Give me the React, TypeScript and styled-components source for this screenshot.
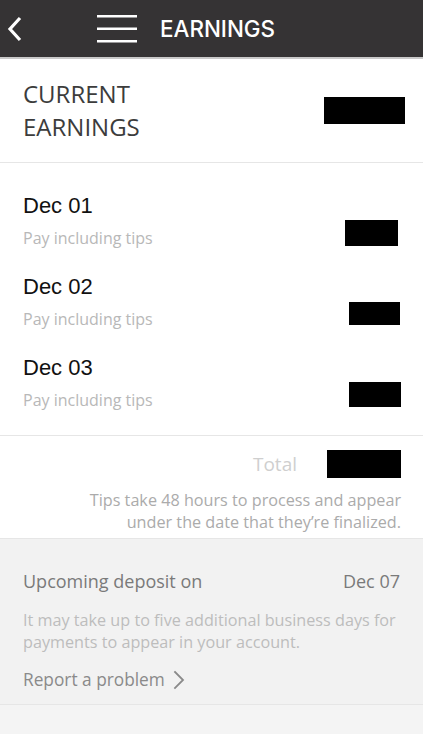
import React from 'react';
import styled, { createGlobalStyle } from 'styled-components';

const GlobalStyle = createGlobalStyle`
  body {
    margin: 0;
    background: #f4f4f4;
    font-family: 'Open Sans', sans-serif;
  }
`;

const Page = styled.div`
  width: 423px;
  min-height: 734px;
  background: #f4f4f4;
`;

const Header = styled.header`
  height: 57px;
  background: #353334;
  border-bottom: 2px solid #c9c9c9;
  display: flex;
  align-items: center;
`;

const IconButton = styled.button<{ $width: number; $end?: boolean }>`
  width: ${(p) => p.$width}px;
  height: 57px;
  padding: 0;
  border: none;
  background: none;
  display: flex;
  align-items: center;
  justify-content: ${(p) => (p.$end ? 'flex-end' : 'center')};
`;

const Title = styled.h1`
  margin: 0 0 0 23px;
  font-family: Inter, 'Liberation Sans', sans-serif;
  font-weight: 500;
  font-size: 22.4px;
  color: #fff;
`;

const Section = styled.section<{ $bg?: string; $pad: string }>`
  background: ${(p) => p.$bg || '#fff'};
  padding: ${(p) => p.$pad};
  border-bottom: 1px solid #e6e6e6;
`;

const Row = styled.div`
  display: flex;
  align-items: center;
  justify-content: space-between;
`;

const BigLabel = styled.div`
  font-size: 24px;
  line-height: 33px;
  color: #3c3c3c;
`;

const Redacted = styled.div<{ $w: number; $h: number; $shift?: number }>`
  width: ${(p) => p.$w}px;
  height: ${(p) => p.$h}px;
  background: #000;
  margin-right: ${(p) => p.$shift ?? 0}px;
`;

const DayRow = styled.div`
  display: flex;
  justify-content: space-between;
  align-items: flex-end;
  height: 81px;
`;

const DayText = styled.div`
  display: flex;
  flex-direction: column;
`;

const DayDate = styled.div`
  font-family: 'Liberation Sans', Arial, sans-serif;
  font-size: 22px;
  line-height: 26px;
  color: #111;
`;

const Muted = styled.div`
  font-size: 16px;
  line-height: 24px;
  color: #b8b8b8;
  margin-top: 7px;
`;

const TotalRow = styled.div`
  display: flex;
  justify-content: flex-end;
  align-items: center;
  gap: 30px;
  height: 30px;
`;

const TotalLabel = styled.span`
  font-size: 19px;
  color: #cfcfcf;
`;

const Note = styled.p<{ $align?: string; $color: string; $top: number }>`
  margin: ${(p) => p.$top}px 0 0;
  font-size: 16.2px;
  line-height: 22px;
  text-align: ${(p) => p.$align || 'left'};
  color: ${(p) => p.$color};
`;

const DepositLabel = styled.span`
  font-size: 18px;
  color: #7a7a7a;
`;

const LinkLine = styled.div`
  margin-top: 15px;
`;

const ReportLink = styled.a`
  display: inline-flex;
  align-items: center;
  gap: 8px;
  font-size: 17.3px;
  color: #8a8a8a;
  text-decoration: none;
`;

const Chevron = ({ size, color, width }: { size: number; color: string; width: number }) => (
  <svg width={size * 0.6} height={size} viewBox="0 0 12 20" fill="none">
    <path d="M2 2 L10 10 L2 18" stroke={color} strokeWidth={width} strokeLinecap="square" />
  </svg>
);

const days = [
  { date: 'Dec 01', w: 53, h: 26, shift: 2, pad: 4 },
  { date: 'Dec 02', w: 51, h: 23, shift: 0, pad: 6 },
  { date: 'Dec 03', w: 52, h: 25, shift: -1, pad: 5 },
];

const App: React.FC = () => {
  return (
    <Page>
      <GlobalStyle />
      <Header>
        <IconButton $width={30}>
          <svg width="16" height="26" viewBox="0 0 16 26" fill="none">
            <path d="M13 2 L3 13 L13 24" stroke="#fff" strokeWidth="3.2" />
          </svg>
        </IconButton>
        <IconButton $width={107} $end>
          <svg width="40" height="28" viewBox="0 0 40 28">
            <rect x="0" y="0" width="40" height="2.5" fill="#fff" />
            <rect x="0" y="12.5" width="40" height="2.5" fill="#fff" />
            <rect x="0" y="25" width="40" height="2.5" fill="#fff" />
          </svg>
        </IconButton>
        <Title>EARNINGS</Title>
      </Header>

      <Section $pad="18px 18px 19px 23px">
        <Row>
          <BigLabel>
            CURRENT
            <br />
            EARNINGS
          </BigLabel>
          <Redacted $w={81} $h={27} />
        </Row>
      </Section>

      <Section $pad="6px 23px 23px 23px">
        {days.map((d) => (
          <DayRow key={d.date}>
            <DayText>
              <DayDate>{d.date}</DayDate>
              <Muted>Pay including tips</Muted>
            </DayText>
            <Redacted $w={d.w} $h={d.h} $shift={d.shift} style={{ marginBottom: d.pad }} />
          </DayRow>
        ))}
      </Section>

      <Section $pad="13px 22px 5px 23px">
        <TotalRow>
          <TotalLabel>Total</TotalLabel>
          <Redacted $w={74} $h={28} />
        </TotalRow>
        <Note $align="right" $color="#ababab" $top={10}>
          Tips take 48 hours to process and appear
          <br />
          under the date that they’re finalized.
        </Note>
      </Section>

      <Section $bg="#f2f2f2" $pad="30px 23px 13px 23px">
        <Row>
          <DepositLabel>Upcoming deposit on</DepositLabel>
          <DepositLabel>Dec 07</DepositLabel>
        </Row>
        <Note $color="#bdbdbd" $top={16}>
          It may take up to five additional business days for payments to appear in your account.
        </Note>
        <LinkLine>
          <ReportLink href="#">
            Report a problem
            <Chevron size={20} color="#8a8a8a" width={1.8} />
          </ReportLink>
        </LinkLine>
      </Section>
    </Page>
  );
};

export default App;
